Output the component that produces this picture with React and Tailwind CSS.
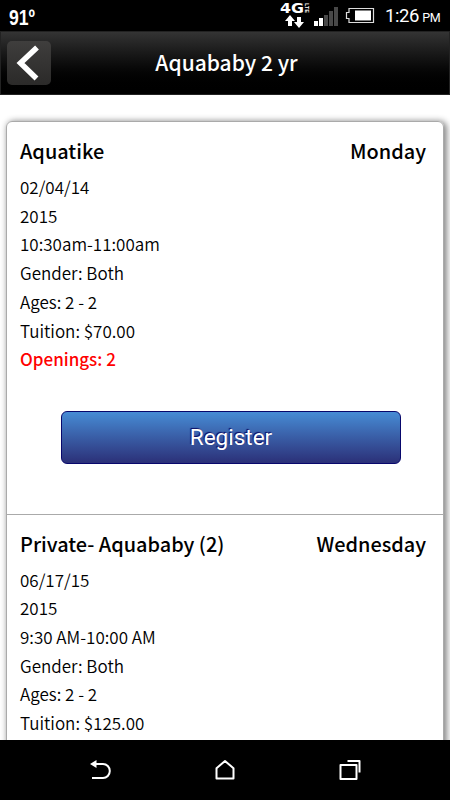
const classes = [
  {
    name: "Aquatike",
    day: "Monday",
    details: ["02/04/14", "2015", "10:30am-11:00am", "Gender: Both", "Ages: 2 - 2", "Tuition: $70.00"],
    openings: 2,
  },
  {
    name: "Private- Aquababy (2)",
    day: "Wednesday",
    details: ["06/17/15", "2015", "9:30 AM-10:00 AM", "Gender: Both", "Ages: 2 - 2", "Tuition: $125.00"],
    openings: 0,
  },
];

function StatusBar() {
  return (
    <div className="h-[31px] shrink-0 bg-black text-white flex items-center justify-between pl-[9px] pr-[10px]">
      <span className="font-['Liberation_Sans_Narrow','Liberation_Sans',sans-serif] font-bold text-[22px] leading-none origin-left scale-x-[0.8] mt-[4px]">
        91º
      </span>

      <div className="flex items-center">
        {/* 4G LTE with data arrows */}
        <svg className="w-[30px] h-[31px] mr-[4px]" viewBox="0 0 30 31" fill="#fff">
          <text x="0" y="13" fontSize="13.5" fontWeight="700" textLength="24" lengthAdjust="spacingAndGlyphs" fontFamily="DejaVu Sans, sans-serif">
            4G
          </text>
          <text transform="translate(24.5 3) rotate(90)" fontSize="5.5" fontWeight="700" textLength="10" lengthAdjust="spacingAndGlyphs" fontFamily="Liberation Sans, sans-serif">
            LTE
          </text>
          <path d="M10 15l5 6h-3v5H8v-5H5zM19 28l-5-6h3v-5h4v5h3z" />
        </svg>

        <svg className="w-6 h-[31px] mr-[7px]" viewBox="0 0 24 31" fill="#484848">
          <rect x="0" y="21" width="4" height="5" fill="#fff" />
          <rect x="5" y="18" width="4" height="8" fill="#fff" />
          <rect x="10" y="15" width="4" height="11" />
          <rect x="15" y="11" width="4" height="15" />
          <rect x="20" y="7" width="4" height="19" />
        </svg>

        <svg className="w-[30px] h-[31px] mr-[10px]" viewBox="0 0 30 31" fill="none">
          <path d="M4 8.5h24.5v14H4v-4H1.5v-6H4z" stroke="#ddd" strokeWidth="1.2" />
          <rect x="10" y="10.5" width="16" height="10" fill="#fff" />
        </svg>

        <span className="w-[55px] whitespace-nowrap text-right font-[Roboto,sans-serif] text-[18.5px] tracking-[-0.4px] leading-none mt-[2px]">
          1:26 <span className="text-[12.5px] -ml-px">PM</span>
        </span>
      </div>
    </div>
  );
}

function Header() {
  return (
    <header className="h-16 shrink-0 bg-linear-to-b from-[#343434] to-black border border-[#222] flex items-center pl-[6px]">
      <button className="w-11 h-11 rounded-[5px] bg-linear-to-b from-[#3f3e3d] to-[#2b2a29] flex items-center justify-center">
        <svg className="w-11 h-11" viewBox="0 0 44 44" fill="none" stroke="#fff" strokeWidth="5.5">
          <path d="M30 6.5L13.5 22L29.5 37.5" />
        </svg>
      </button>
      <h1 className="flex-1 pr-[47px] text-center text-white text-[21px] font-medium">Aquababy 2 yr</h1>
    </header>
  );
}

function ClassItem({ item }) {
  return (
    <div className="h-[392.5px] px-[13px] pt-[14px] border-b border-[#aaa]">
      <div className="flex justify-between pr-1 text-[19.9px] leading-[30px] font-medium">
        <h2>{item.name}</h2>
        <span>{item.day}</span>
      </div>
      <div className="mt-[7px] text-[17px] leading-[28.7px] font-[350]">
        {item.details.map((line) => (
          <p key={line + item.name}>{line}</p>
        ))}
        {item.openings > 0 && <p className="text-[#f00] font-medium">Openings: {item.openings}</p>}
      </div>
      {item.openings > 0 && (
        <button className="block w-[340px] h-[53px] mt-[37px] ml-[41px] rounded-[6px] border border-[#08086c] bg-linear-to-b from-[#468cd5] to-[#2b3078] font-[Roboto,sans-serif] text-[22.5px] text-white [text-shadow:-1px_-1px_1px_#0a0a60]">
          Register
        </button>
      )}
    </div>
  );
}

function NavBar() {
  return (
    <nav className="h-[60px] shrink-0 bg-black flex items-center justify-center gap-[101px]">
      <svg className="w-6 h-6" viewBox="0 0 24 24" fill="none" stroke="#fff" strokeWidth="2">
        <path d="M6 6h9a6.8 7 0 0 1 0 14H4" />
        <path d="M2 6L8.5 2v8z" fill="#fff" stroke="none" />
      </svg>
      <svg className="w-6 h-6" viewBox="0 0 24 24" fill="none" stroke="#fff" strokeWidth="2" strokeLinejoin="round">
        <path d="M3.5 10.2L12 3l8.5 7.2v10.3h-17z" />
      </svg>
      <svg className="w-6 h-6" viewBox="0 0 24 24" fill="none" stroke="#fff" strokeWidth="2" strokeLinejoin="round">
        <path d="M2.5 7h16v14h-16zM9.5 3h12v11.5" />
      </svg>
    </nav>
  );
}

export default function App() {
  return (
    <div className="w-[450px] h-[800px] flex flex-col overflow-hidden bg-white text-black font-['Noto_Sans_CJK_JP',sans-serif]">
      <StatusBar />
      <Header />
      <main className="flex-1 min-h-0 overflow-hidden px-[6px] pt-[26px]">
        <div className="w-[438px] rounded-[6px] border border-[#aaa] shadow-[2px_1px_6px_1px_#888]">
          {classes.map((item) => (
            <ClassItem key={item.name} item={item} />
          ))}
        </div>
      </main>
      <NavBar />
    </div>
  );
}
